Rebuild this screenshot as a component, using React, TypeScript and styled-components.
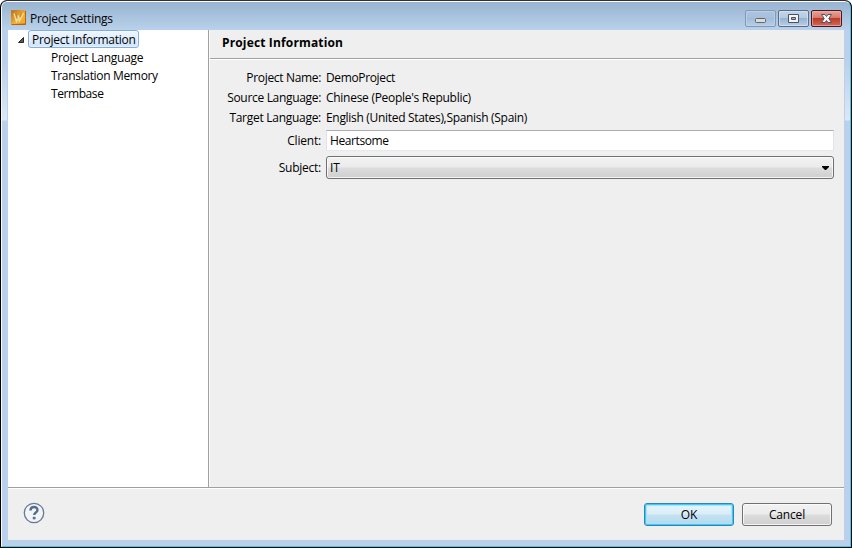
import React from "react";
import styled, { createGlobalStyle, css } from "styled-components";

const Global = createGlobalStyle`
  html, body { margin: 0; padding: 0; width: 852px; height: 548px; overflow: hidden; background: #fff; }
  * { box-sizing: border-box; }
  body { font-family: "Open Sans", "Noto Sans", sans-serif; font-size: 12px; line-height: 16px; color: #000; }
  button, input { font: inherit; color: inherit; }
`;

const Window = styled.div`
  width: 852px;
  height: 548px;
  border: 1px solid #000;
  border-top-color: #303038;
  border-radius: 7px 7px 0 0;
  overflow: hidden;
  display: flex;
  background: #303038;
`;

const Frame = styled.div`
  flex: 1;
  display: flex;
  flex-direction: column;
  border: 1px solid #35cfee;
  border-top-color: #fff;
  border-left-color: #f4fbff;
  border-radius: 6px 6px 0 0;
  padding: 0 6px 6px;
  background: linear-gradient(#99b4d1 0, #b9d1ea 28px, #b9d1ea 60px, #dce8f5 118px, #b9d1ea 119px);
`;

const TitleBar = styled.header`
  height: 28px;
  flex: none;
  display: flex;
  align-items: flex-start;
  padding: 8px 2px 0 3px;
`;

const Text = styled.span<{ $spacing?: number }>`
  white-space: pre;
  letter-spacing: ${(p) => p.$spacing ?? 0}px;
`;

const Title = styled(Text)`
  margin: 1px 0 0 4px;
  flex: 1;
`;

const Controls = styled.div`
  display: flex;
  gap: 2px;
`;

const ControlButton = styled.button<{ $kind: "dim" | "normal" | "close" }>`
  width: 31px;
  height: 17px;
  padding: 0;
  display: flex;
  border-radius: 2px;
  border: 1px solid #596d87;
  background: linear-gradient(#c3d5e8 0, #b4cae2 47%, #98b3d1 50%, #b7cfe8 100%);
  box-shadow: inset 0 0 0 1px #dbe7f3aa;
  ${(p) => p.$kind === "dim" && css`
    border-color: #8299b5;
    background: linear-gradient(#aec4dd, #a5bfdb 50%, #a2bcd9 50%, #b6cee8);
    box-shadow: inset 0 0 0 1px #c4d6e9aa;
  `}
  ${(p) => p.$kind === "close" && css`
    border-color: #4b1420;
    background: linear-gradient(#e5a397 0, #d57a6b 47%, #bd3a25 50%, #d3695a 100%);
    box-shadow: inset 0 0 0 1px #efb5acaa;
  `}
`;

const Client = styled.main`
  flex: 1;
  display: flex;
  flex-direction: column;
  background: #efefef;
  box-shadow: 0 0 0 1px #b9d1ea;
`;

const Body = styled.div`
  height: 457px;
  display: flex;
`;

const Tree = styled.nav`
  width: 201px;
  background: #fff;
  border-right: 1px solid #a0a0a0;
`;

const TreeRoot = styled.div`
  display: flex;
  height: 18px;
  padding-left: 9px;
`;

const TreeLabel = styled.div`
  width: 111px;
  height: 18px;
  margin-left: 3px;
  padding-left: 3px;
  line-height: 17px;
  border: 1px solid #84acdd;
  border-radius: 3px;
  background: linear-gradient(#eff6ff, #cfe4ff);
  box-shadow: inset 0 0 0 1px #f5faff99;
`;

const TreeItem = styled.div`
  height: 18px;
  padding: 2px 0 0 43px;
`;

const Page = styled.section`
  flex: 1;
  border-left: 1px solid #fafafa;
`;

const PageTitle = styled.h1`
  height: 30px;
  margin: 0;
  padding: 5px 0 0 12px;
  font-size: 12px;
  font-weight: 700;
  border-bottom: 1px solid #fff;
  box-shadow: inset 0 -1px #a0a0a0;
`;

const Form = styled.div`
  display: grid;
  grid-template-columns: 111px 508px;
  grid-template-rows: 20px 20px 20px 25px 29px;
  column-gap: 5px;
  padding-top: 8px;
  align-items: center;
`;

const Label = styled(Text)`
  justify-self: end;
`;

const Field = styled.input`
  width: 508px;
  height: 21px;
  padding: 0 3px;
  outline: 0;
  letter-spacing: -0.4px;
  background: #fff;
  border: 1px solid #e2e3ea;
  border-top-color: #abadb3;
  border-bottom-color: #e3e9ef;
`;

const face = css`
  border: 1px solid #707070;
  border-radius: 3px;
  background: linear-gradient(#f2f2f2 0, #ebebeb 49%, #dddddd 51%, #cfcfcf 100%);
  box-shadow: inset 0 0 0 1px #fcfcfccc;
`;

const Select = styled.div`
  ${face}
  width: 508px;
  height: 23px;
  display: flex;
  align-items: center;
  justify-content: space-between;
  padding: 0 4px 0 3px;
`;

const Footer = styled.footer`
  flex: 1;
  border-top: 1px solid #a0a0a0;
  box-shadow: inset 0 1px #fff;
  display: flex;
  align-items: flex-start;
  padding: 14px 12px 0 15px;
`;

const Actions = styled.div`
  margin-left: auto;
  padding-top: 1px;
  display: flex;
  gap: 8px;
`;

const Button = styled.button<{ $primary?: boolean }>`
  ${face}
  width: 90px;
  height: 23px;
  padding: 0;
  ${(p) => p.$primary && css`
    border-color: #3c7fb1;
    background: linear-gradient(#eaf5fb 0, #d9edf8 49%, #c5e2f3 51%, #b3d8ee 100%);
    box-shadow: inset 0 0 0 1px #32cffa, inset 0 0 1px 2px #a5e4fa;
  `}
`;

function AppIcon() {
  return (
    <svg width="15" height="15" viewBox="0 0 15 15">
      <defs>
        <linearGradient id="gold" x1="0" y1="0" x2="1" y2="1">
          <stop offset="0" stopColor="#b8701a" />
          <stop offset=".5" stopColor="#eda62c" />
          <stop offset="1" stopColor="#dc7a10" />
        </linearGradient>
      </defs>
      <rect width="15" height="15" rx="1" fill="url(#gold)" />
      <path d="M1 14L14 13V3Z" fill="#f6c23d" opacity=".6" />
      <path d="M.5 14.5h14V1" stroke="#b96312" fill="none" />
      <path d="M3 3.500l2.500 8 2-6 .8 5.500 4.200-8" stroke="#f3dfa0" strokeWidth="1.300" fill="none" />
      <path d="M4.800 3.500l1.500 5M10.500 3L9 7" stroke="#a88a48" fill="none" />
    </svg>
  );
}

const Glyph = styled.svg`
  display: block;
  flex: none;
`;

export default function App() {
  return (
    <>
      <Global />
      <Window>
        <Frame>
          <TitleBar>
            <AppIcon />
            <Title $spacing={-0.25}>Project Settings</Title>
            <Controls>
              <ControlButton $kind="dim" aria-label="Minimize">
                <Glyph width="29" height="15"><rect x="9.500" y="7.500" width="10" height="4" rx="1" fill="#dcdcd8" stroke="#62656b" /></Glyph>
              </ControlButton>
              <ControlButton $kind="normal" aria-label="Maximize">
                <Glyph width="29" height="15"><path d="M9.500 3.500h10v8h-10zM12.500 6.500v2h4v-2z" fill="#f4f4f4" stroke="#4c5265" fillRule="evenodd" /></Glyph>
              </ControlButton>
              <ControlButton $kind="close" aria-label="Close">
                <Glyph width="29" height="15"><path d="M9.500 3.500h3.500l1.500 2 1.500-2h3.500l-2.700 4 2.700 4h-3.500l-1.500-2-1.500 2H9.500l2.700-4z" fill="#f6f6f6" stroke="#4e5368" /></Glyph>
              </ControlButton>
            </Controls>
          </TitleBar>
          <Client>
            <Body>
              <Tree>
                <TreeRoot>
                  <Glyph width="8" height="18"><path d="M1.500 12.500h5v-5z" fill="#595959" stroke="#262626" /></Glyph>
                  <TreeLabel><Text $spacing={-0.28}>Project Information</Text></TreeLabel>
                </TreeRoot>
                <TreeItem><Text $spacing={-0.25}>Project Language</Text></TreeItem>
                <TreeItem><Text $spacing={-0.33}>Translation Memory</Text></TreeItem>
                <TreeItem><Text $spacing={-0.42}>Termbase</Text></TreeItem>
              </Tree>
              <Page>
                <PageTitle><Text $spacing={0.15}>Project Information</Text></PageTitle>
                <Form>
                  <Label $spacing={-0.33}>Project Name:</Label><Text $spacing={-0.36}>DemoProject</Text>
                  <Label $spacing={-0.32}>Source Language:</Label><Text $spacing={-0.28}>Chinese (People's Republic)</Text>
                  <Label $spacing={-0.28}>Target Language:</Label><Text $spacing={-0.31}>English (United States),Spanish (Spain)</Text>
                  <Label $spacing={-0.2}>Client:</Label><Field defaultValue="Heartsome" />
                  <Label $spacing={-0.25}>Subject:</Label>
                  <Select><Text>IT</Text><Glyph width="7" height="4"><path d="M0 0h7v1L4 4H3L0 1z" fill="#000" /></Glyph></Select>
                </Form>
              </Page>
            </Body>
            <Footer>
              <Glyph width="22" height="22" viewBox="0 0 22 22">
                <circle cx="11" cy="11" r="9.700" fill="#f3f4f6" stroke="#667997" strokeWidth="1.300" />
                <path d="M7.500 8.500C7.500 4 14.500 4 14.500 8c0 2.500-3.300 2.500-3.300 5" fill="none" stroke="#556b90" strokeWidth="2.400" />
                <rect x="9.800" y="14.800" width="2.700" height="2.500" fill="#556b90" />
              </Glyph>
              <Actions>
                <Button $primary><Text>OK</Text></Button>
                <Button><Text $spacing={-0.15}>Cancel</Text></Button>
              </Actions>
            </Footer>
          </Client>
        </Frame>
      </Window>
    </>
  );
}
